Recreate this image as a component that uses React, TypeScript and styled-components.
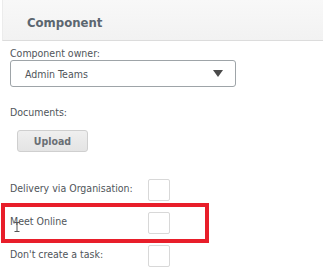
import React from "react";
import styled, { createGlobalStyle } from "styled-components";

const GlobalStyle = createGlobalStyle`
  html, body { margin: 0; padding: 0; background: #ffffff; }
  body { font-family: "DejaVu Sans Condensed", "DejaVu Sans", Tahoma, sans-serif; color: #555a5f; }
`;

const Page = styled.div`
  width: 323px;
  height: 276px;
  overflow: hidden;
  background: #fff;
`;

const Header = styled.div`
  height: 41px;
  box-sizing: border-box;
  border-bottom: 1px solid #dcdcdc;
  border-left: 1px solid #ececec;
  margin-left: 2px;
  background: linear-gradient(#f8f8f8, #f2f2f2);
  display: flex;
  align-items: center;
  padding-left: 24px;
  padding-top: 5px;
`;

const Title = styled.h2`
  margin: 0;
  font-size: 13px;
  font-weight: bold;
  color: #5b6670;
`;

const Body = styled.div`
  padding: 0 0 0 10px;
  display: flex;
  flex-direction: column;
`;

const Label = styled.div<{ $top: number }>`
  font-size: 10.5px;
  line-height: 13px;
  margin-top: ${(p) => p.$top}px;
  color: #50555a;
`;

const Select = styled.div`
  width: 226px;
  height: 27px;
  box-sizing: border-box;
  border: 1px solid #9ea4a8;
  border-radius: 3px;
  display: flex;
  align-items: center;
  justify-content: space-between;
  padding: 0 12px 0 14px;
  font-size: 10.5px;
  color: #50555a;
`;

const Arrow = styled.span`
  width: 0;
  height: 0;
  border-left: 5px solid transparent;
  border-right: 5px solid transparent;
  border-top: 7px solid #4a4a4a;
`;

const UploadButton = styled.button`
  margin: 11px 0 0 7px;
  width: 71px;
  height: 22px;
  box-sizing: border-box;
  border: 1px solid #cfcfcf;
  border-radius: 3px;
  background: linear-gradient(#efefef, #e4e4e4);
  font-family: inherit;
  font-size: 10.5px;
  font-weight: bold;
  color: #6a6f74;
  padding: 0;
`;

const Rows = styled.div`
  margin-top: 27px;
  display: flex;
  flex-direction: column;
  gap: 11px;
`;

const Row = styled.div`
  position: relative;
  display: grid;
  grid-template-columns: 138px 22px;
  align-items: start;
`;

const RowLabel = styled.div`
  font-size: 10.5px;
  line-height: 13px;
  padding-top: 3px;
  color: #50555a;
`;

const Check = styled.div`
  width: 22px;
  height: 22px;
  box-sizing: border-box;
  border: 1px solid #d8d8d8;
  border-radius: 2px;
  background: #fff;
`;

const Highlight = styled.div`
  position: absolute;
  left: -9px;
  top: -9px;
  width: 208px;
  height: 40px;
  box-sizing: border-box;
  border: 4px solid #e81e2a;
  pointer-events: none;
`;

const Cursor = styled.svg`
  position: absolute;
  left: 4px;
  top: 10px;
`;

export default function App() {
  return (
    <Page>
      <GlobalStyle />
      <Header>
        <Title>Component</Title>
      </Header>
      <Body>
        <Label $top={6}>Component owner:</Label>
        <Select>
          <span>Admin Teams</span>
          <Arrow />
        </Select>
        <Label $top={19}>Documents:</Label>
        <UploadButton>Upload</UploadButton>
        <Rows>
          <Row>
            <RowLabel>Delivery via Organisation:</RowLabel>
            <Check />
          </Row>
          <Row>
            <RowLabel>Meet Online</RowLabel>
            <Check />
            <Highlight />
            <Cursor width="6" height="10" viewBox="0 0 6 10">
              <path d="M0.5 0.5h5M3 0.5v9M0.5 9.5h5" stroke="#555" strokeWidth="1" fill="none" />
            </Cursor>
          </Row>
          <Row>
            <RowLabel>Don't create a task:</RowLabel>
            <Check />
          </Row>
        </Rows>
      </Body>
    </Page>
  );
}
